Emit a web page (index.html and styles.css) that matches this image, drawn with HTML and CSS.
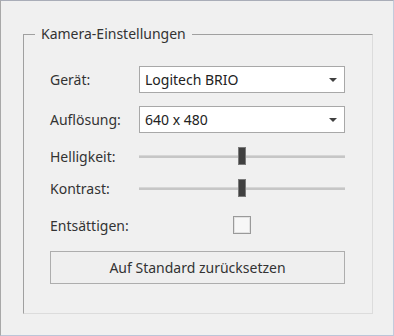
FILE: index.html
```html
<!DOCTYPE html>
<html lang="de">
<head>
<meta charset="UTF-8" />
<title>Kamera-Einstellungen</title>
<link rel="stylesheet" href="styles.css">
</head>
<body>

<div class="window">
  <fieldset class="group">
    <legend>Kamera-Einstellungen</legend>

    <div class="row row-combo">
      <div class="label">Gerät:</div>
      <div class="combo">
        <span>Logitech BRIO</span>
        <span class="arrow"></span>
      </div>
    </div>

    <div class="row row-combo second">
      <div class="label">Auflösung:</div>
      <div class="combo">
        <span>640 x 480</span>
        <span class="arrow"></span>
      </div>
    </div>

    <div class="row row-slider first-slider">
      <div class="label">Helligkeit:</div>
      <div class="slider">
        <div class="track"></div>
        <div class="thumb" style="left: 99px;"></div>
      </div>
    </div>

    <div class="row row-slider">
      <div class="label">Kontrast:</div>
      <div class="slider">
        <div class="track"></div>
        <div class="thumb" style="left: 99px;"></div>
      </div>
    </div>

    <div class="row row-check">
      <div class="label">Entsättigen:</div>
      <div class="check-cell">
        <span class="checkbox"></span>
      </div>
    </div>

    <button class="reset">Auf Standard zurücksetzen</button>
  </fieldset>
</div>

</body>
</html>
```

FILE: styles.css
```css
html, body {
  margin: 0;
  padding: 0;
}
body {
  font-family: 'Segoe UI', 'Noto Sans', 'Open Sans', sans-serif;
  font-size: 14px;
  color: #333333;
  background: #f0f0f0;
}
.window {
  box-sizing: border-box;
  width: 394px;
  height: 336px;
  background: #f0f0f0;
  border-top: 1px solid #a9adb8;
  border-left: 1px solid #a8a8a8;
  border-right: 1px solid #c3cbdd;
  border-bottom: 1px solid #bcc5d8;
  padding: 23px 0 0 22px;
}
.group {
  box-sizing: border-box;
  width: 350px;
  height: 290px;
  margin: 0;
  padding: 22px 27px 0 26px;
  border: 1px solid;
  border-color: #a0a0a0 #dcdcdc #dcdcdc #a0a0a0;
}
.group legend {
  margin-left: -15px;
  padding: 0 6px;
  font-size: 14px;
  line-height: 20px;
  color: #333333;
}
.row {
  display: flex;
  align-items: center;
}
.label {
  width: 89px;
  flex: none;
  font-size: 14px;
}
.row-combo {
  height: 27px;
}
.row-combo.second {
  margin-top: 13px;
}
.combo {
  box-sizing: border-box;
  flex: 1;
  height: 27px;
  background: #ffffff;
  border: 1px solid #a8a8a8;
  display: flex;
  align-items: center;
  justify-content: space-between;
  padding: 0 7px 0 5px;
  font-size: 14px;
  color: #222222;
}
.arrow {
  width: 0;
  height: 0;
  border-left: 4px solid transparent;
  border-right: 4px solid transparent;
  border-top: 4px solid #404040;
  margin-top: 1px;
}
.row-slider {
  height: 24px;
  margin-top: 8px;
}
.row-slider.first-slider {
  margin-top: 11px;
}
.slider {
  position: relative;
  flex: 1;
  height: 24px;
  display: flex;
  align-items: center;
}
.track {
  width: 100%;
  height: 3px;
  background: #c6c6c6;
  border-top: 1px solid #d6d6d6;
  box-sizing: border-box;
}
.thumb {
  position: absolute;
  top: 3px;
  box-sizing: border-box;
  width: 8px;
  height: 18px;
  background: #404040;
  border: 1px solid #7a7a7a;
}
.row-check {
  height: 24px;
  margin-top: 13px;
}
.check-cell {
  flex: 1;
  display: flex;
  padding-left: 94px;
}
.checkbox {
  box-sizing: border-box;
  width: 18px;
  height: 18px;
  background: #f7f7f7;
  border: 1px solid #9a9a9a;
  box-shadow: inset 0 0 0 1px #e2e2e2;
}
.reset {
  display: block;
  box-sizing: border-box;
  width: 295px;
  height: 33px;
  margin-top: 14px;
  margin-left: 0;
  background: #efefef;
  border: 1px solid #adadad;
  font-family: inherit;
  font-size: 14px;
  color: #333333;
  padding: 0;
}
```
